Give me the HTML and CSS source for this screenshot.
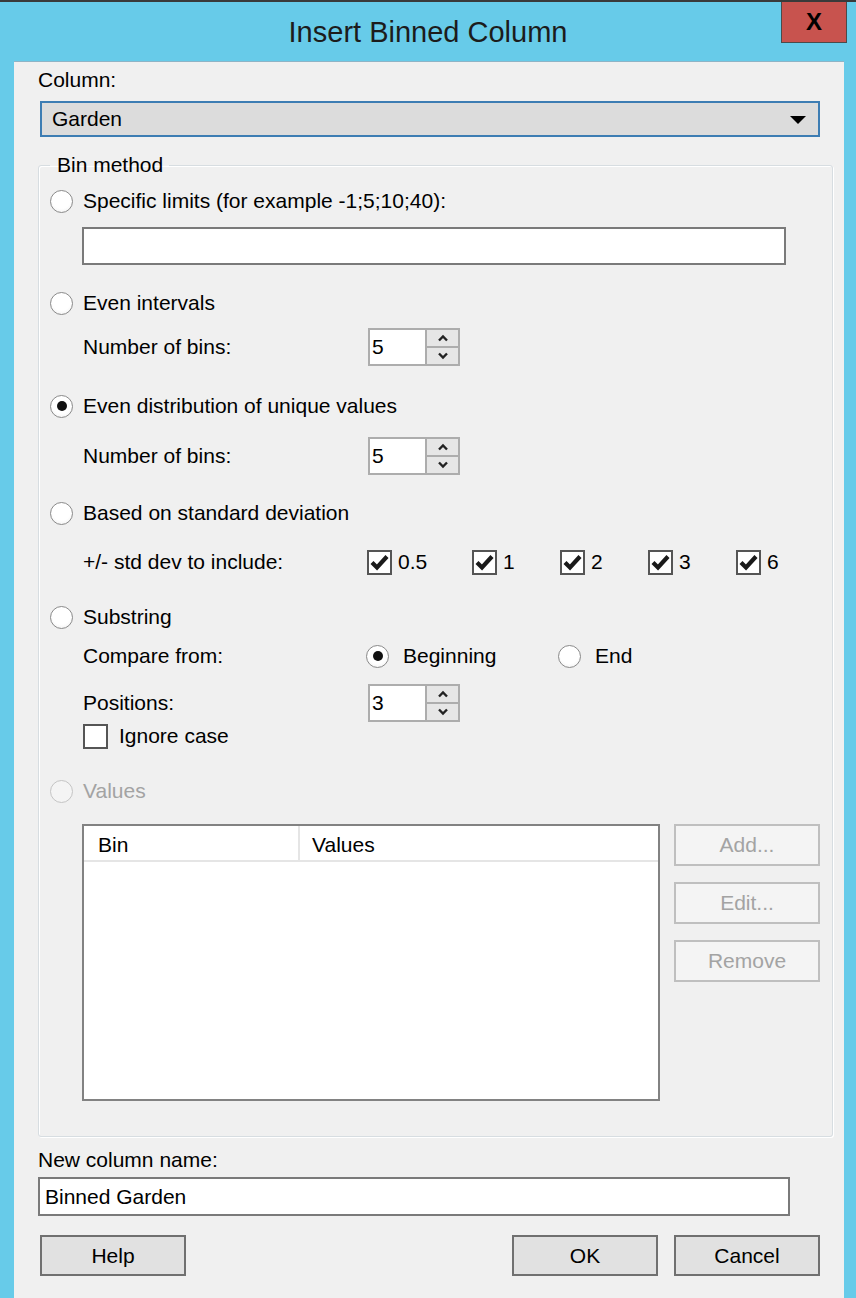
FILE: index.html
```html
<!DOCTYPE html>
<html lang="en">
<head>
    <meta charset="UTF-8">
    <meta name="viewport" content="width=device-width, initial-scale=1.0">
    <title>Insert Binned Column</title>
    <link rel="stylesheet" href="styles.css">
</head>
<body>
    <div class="window">
        <div class="titlebar">
            <span></span>
            <h1 class="title">Insert Binned Column</h1>
            <button class="close-btn">X</button>
        </div>

        <div class="client">
            <div class="label column-label">Column:</div>
            <div class="combo">
                <span>Garden</span>
                <span class="combo-arrow"></span>
            </div>

            <fieldset class="group">
                <legend>Bin method</legend>

                <div class="radio-row row-specific"><span class="radio"></span>Specific limits (for example -1;5;10;40):</div>
                <div class="textbox limits-box"></div>

                <div class="radio-row row-even"><span class="radio"></span>Even intervals</div>
                <div class="sub-row spin-row row-spin1">
                    <span class="field-label">Number of bins:</span>
                    <div class="spin">
                        <span class="spin-value">5</span>
                        <span class="spin-buttons">
                            <span class="spin-btn"><svg width="12" height="8" viewBox="0 0 12 8"><polyline points="2,6.5 6,2.5 10,6.5" fill="none" stroke="#222" stroke-width="2.4"/></svg></span>
                            <span class="spin-btn"><svg width="12" height="8" viewBox="0 0 12 8"><polyline points="2,1.5 6,5.5 10,1.5" fill="none" stroke="#222" stroke-width="2.4"/></svg></span>
                        </span>
                    </div>
                </div>

                <div class="radio-row row-unique"><span class="radio checked"></span>Even distribution of unique values</div>
                <div class="sub-row spin-row row-spin2">
                    <span class="field-label">Number of bins:</span>
                    <div class="spin">
                        <span class="spin-value">5</span>
                        <span class="spin-buttons">
                            <span class="spin-btn"><svg width="12" height="8" viewBox="0 0 12 8"><polyline points="2,6.5 6,2.5 10,6.5" fill="none" stroke="#222" stroke-width="2.4"/></svg></span>
                            <span class="spin-btn"><svg width="12" height="8" viewBox="0 0 12 8"><polyline points="2,1.5 6,5.5 10,1.5" fill="none" stroke="#222" stroke-width="2.4"/></svg></span>
                        </span>
                    </div>
                </div>

                <div class="radio-row row-std"><span class="radio"></span>Based on standard deviation</div>
                <div class="sub-row check-row">
                    <span class="field-label">+/- std dev to include:</span>
                    <div class="checks">
                        <span class="check-item"><span class="checkbox checked"><svg width="19" height="17" viewBox="0 0 19 17"><path d="M2 8.5 L7 13.5 L17 2.5" fill="none" stroke="#1a1a1a" stroke-width="4.2"/></svg></span>0.5</span>
                        <span class="check-item"><span class="checkbox checked"><svg width="19" height="17" viewBox="0 0 19 17"><path d="M2 8.5 L7 13.5 L17 2.5" fill="none" stroke="#1a1a1a" stroke-width="4.2"/></svg></span>1</span>
                        <span class="check-item"><span class="checkbox checked"><svg width="19" height="17" viewBox="0 0 19 17"><path d="M2 8.5 L7 13.5 L17 2.5" fill="none" stroke="#1a1a1a" stroke-width="4.2"/></svg></span>2</span>
                        <span class="check-item"><span class="checkbox checked"><svg width="19" height="17" viewBox="0 0 19 17"><path d="M2 8.5 L7 13.5 L17 2.5" fill="none" stroke="#1a1a1a" stroke-width="4.2"/></svg></span>3</span>
                        <span class="check-item"><span class="checkbox checked"><svg width="19" height="17" viewBox="0 0 19 17"><path d="M2 8.5 L7 13.5 L17 2.5" fill="none" stroke="#1a1a1a" stroke-width="4.2"/></svg></span>6</span>
                    </div>
                </div>

                <div class="radio-row row-substring"><span class="radio"></span>Substring</div>
                <div class="sub-row compare-row">
                    <span class="field-label">Compare from:</span>
                    <span class="compare-item first"><span class="radio checked"></span>Beginning</span>
                    <span class="compare-item"><span class="radio"></span>End</span>
                </div>
                <div class="sub-row spin-row row-positions">
                    <span class="field-label">Positions:</span>
                    <div class="spin">
                        <span class="spin-value">3</span>
                        <span class="spin-buttons">
                            <span class="spin-btn"><svg width="12" height="8" viewBox="0 0 12 8"><polyline points="2,6.5 6,2.5 10,6.5" fill="none" stroke="#222" stroke-width="2.4"/></svg></span>
                            <span class="spin-btn"><svg width="12" height="8" viewBox="0 0 12 8"><polyline points="2,1.5 6,5.5 10,1.5" fill="none" stroke="#222" stroke-width="2.4"/></svg></span>
                        </span>
                    </div>
                </div>
                <div class="sub-row ignore-row"><span class="checkbox"></span>Ignore case</div>

                <div class="radio-row row-values disabled"><span class="radio"></span>Values</div>
                <div class="sub-row values-row">
                    <div class="list">
                        <div class="list-head">
                            <span class="col-bin">Bin</span>
                            <span class="col-values">Values</span>
                        </div>
                    </div>
                    <div class="side-buttons">
                        <button class="btn disabled">Add...</button>
                        <button class="btn disabled">Edit...</button>
                        <button class="btn disabled">Remove</button>
                    </div>
                </div>
            </fieldset>

            <div class="label name-label">New column name:</div>
            <div class="textbox name-box">Binned Garden</div>

            <div class="footer">
                <button class="btn">Help</button>
                <div class="footer-right">
                    <button class="btn">OK</button>
                    <button class="btn">Cancel</button>
                </div>
            </div>
        </div>
    </div>
</body>
</html>
```

FILE: styles.css
```css
* { box-sizing: border-box; }
body { margin: 0; font-family: "Liberation Sans", Arial, sans-serif; font-size: 21px; color: #000; background: #67cbe9; }
button { font-family: inherit; font-size: inherit; color: inherit; }

.window { width: 856px; height: 1298px; background: #67cbe9; border-top: 2px solid #3a3a3a; display: flex; flex-direction: column; overflow: hidden; }

.titlebar { height: 59px; display: grid; grid-template-columns: 1fr auto 1fr; align-items: center; }
.title { margin: 0; font-size: 29px; font-weight: normal; color: #1c1c1c; line-height: 1; padding-top: 2px; }
.close-btn { justify-self: end; align-self: start; width: 66px; height: 41px; margin-right: 9px; padding: 0; background: #c8534e; border: 1px solid #4b4b4b; border-top: none; font-size: 24px; font-weight: bold; color: #000; line-height: 1; }

.client { flex: 1; margin: 0 12px 0 14px; background: #f0f0f0; border-top: 1px solid #8eb4c6; padding-left: 24px; }

.label { line-height: 24px; height: 24px; }
.column-label { margin-top: 6px; }

.combo { margin: 9px 0 0 2px; width: 780px; height: 36px; background: #dcdcdc; border: 2px solid #3d7db3; display: flex; align-items: center; justify-content: space-between; padding: 0 12px 0 10px; }
.combo-arrow { width: 0; height: 0; border-left: 8px solid transparent; border-right: 8px solid transparent; border-top: 8px solid #000; margin-top: 1px; }

.group { margin: 16px 0 0 0; width: 795px; padding: 0 0 35px 11px; border: 1px solid #d7dde1; border-radius: 3px; box-shadow: 1px 1px 0 #fff, inset 1px 1px 0 #fff; }
.group legend { padding: 0 6px 0 7px; line-height: 24px; }

.radio-row { height: 30px; display: flex; align-items: center; }
.radio { width: 23px; height: 23px; border-radius: 50%; border: 1.5px solid #8a8a8a; background: radial-gradient(circle at 50% 40%, #fff 55%, #ececec 100%); display: inline-flex; align-items: center; justify-content: center; flex-shrink: 0; margin-right: 10px; }
.radio.checked::after { content: ""; width: 10px; height: 10px; border-radius: 50%; background: #111; }
.radio-row.disabled { color: #a3a3a3; }
.radio-row.disabled .radio { border-color: #c4c4c4; background: #f4f4f4; }

.row-specific { margin-top: 9px; }
.row-even { margin-top: 23px; }
.row-unique { margin-top: 25px; }
.row-std { margin-top: 23px; }
.row-substring { margin-top: 25px; }
.row-values { margin-top: 28px; }

.textbox { background: #fff; border: 2px solid #7a7a7a; display: flex; align-items: center; padding-left: 5px; }
.limits-box { margin: 11px 0 0 32px; width: 704px; height: 38px; }

.sub-row { margin-left: 32px; padding-left: 1px; display: flex; align-items: center; }
.field-label { width: 285px; flex-shrink: 0; }

.spin-row { height: 38px; }
.row-spin1 { margin-top: 10px; }
.row-spin2 { margin-top: 16px; }
.row-positions { margin-top: 13px; }
.spin { width: 92px; height: 38px; border: 2px solid #adadad; display: flex; background: #adadad; }
.spin-value { flex: 1; background: #fff; padding-left: 2px; line-height: 34px; }
.spin-buttons { width: 31px; margin-left: 2px; display: flex; flex-direction: column; gap: 2px; }
.spin-btn { flex: 1; background: #e6e6e6; display: flex; align-items: center; justify-content: center; }

.check-row { height: 30px; margin-top: 19px; }
.checks { display: grid; grid-template-columns: 105px 88px 88px 88px auto; margin-left: -1px; }
.check-item { display: flex; align-items: center; }
.checkbox { width: 25px; height: 25px; border: 2px solid #555; background: #fff; display: inline-flex; align-items: center; justify-content: center; flex-shrink: 0; margin-right: 6px; }

.compare-row { height: 30px; margin-top: 9px; }
.compare-item { display: flex; align-items: center; margin-left: -2px; }
.compare-item.first { width: 194px; }
.compare-item .radio { margin-right: 14px; }

.ignore-row { height: 24px; margin-top: 2px; }
.ignore-row .checkbox { margin-right: 11px; }

.values-row { margin-top: 18px; padding-left: 0; align-items: flex-start; gap: 14px; }
.list { width: 578px; height: 277px; border: 2px solid #828282; background: #fff; }
.list-head { display: flex; height: 36px; border-bottom: 2px solid #e5e5e5; }
.col-bin { width: 216px; padding: 2px 0 0 14px; line-height: 34px; border-right: 2px solid #e5e5e5; }
.col-values { padding: 2px 0 0 12px; line-height: 34px; }

.side-buttons { display: flex; flex-direction: column; gap: 16px; }

.btn { width: 146px; height: 41px; background: #e1e1e1; border: 2px solid #707070; padding: 0; }
.btn.disabled { height: 42px; background: #f4f4f4; border-color: #bfbfbf; color: #a3a3a3; }

.name-label { margin-top: 11px; }
.name-box { margin-top: 5px; width: 752px; height: 39px; }

.footer { margin: 19px 0 0 2px; width: 780px; display: flex; justify-content: space-between; }
.footer-right { display: flex; gap: 16px; }
```
